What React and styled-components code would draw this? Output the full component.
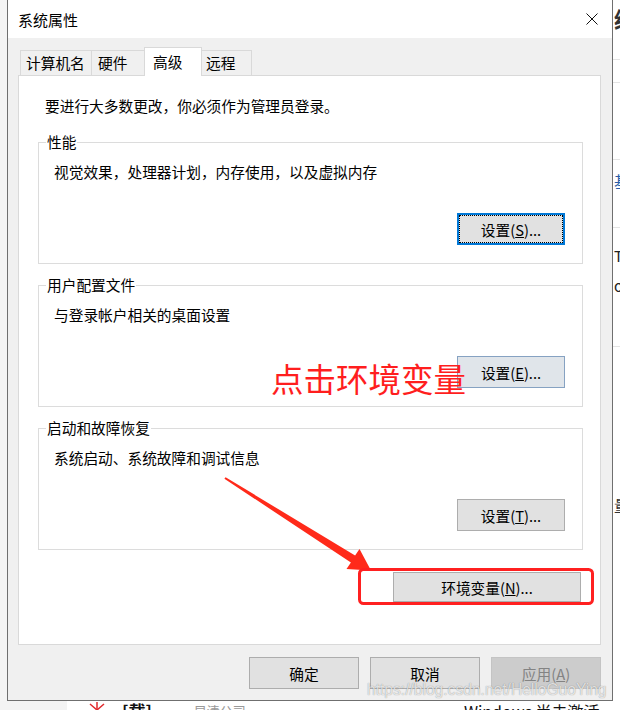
import React from "react"
import styled, { createGlobalStyle } from "styled-components"

const GlobalStyle = createGlobalStyle`
html, body {
    margin: 0;
    padding: 0;
    background: #fff;
}
body {
    font-family: "Noto Sans CJK SC", "Liberation Sans", sans-serif;
    font-size: 14.7px;
    color: #000;
}
`

const Page = styled.div`
position: relative;
width: 620px;
height: 710px;
overflow: hidden;
display: flex;
flex-direction: column;
background: #fff;
`

const TopRow = styled.div`
display: flex;
height: 701px;
`

const LeftGutter = styled.div`
width: 7px;
background: #f4f4f4;
`

const Dialog = styled.div`
width: 604px;
height: 700px;
border: 1px solid #6f6f6f;
border-top: none;
background: #f0f0f0;
display: flex;
flex-direction: column;
`

const TitleBar = styled.div`
height: 38px;
background: #fff;
display: flex;
align-items: center;
justify-content: space-between;
padding-left: 10px;
font-size: 15px;
`

const CloseButton = styled.div`
width: 41px;
height: 38px;
display: flex;
align-items: center;
justify-content: center;
`

const Body = styled.div`
flex: 1;
display: flex;
flex-direction: column;
padding: 9px 11px 11px 10px;
`

const TabStrip = styled.div`
display: flex;
align-items: flex-end;
height: 28px;
margin-left: 2px;
position: relative;
z-index: 1;
`

const Tab = styled.div`
box-sizing: border-box;
width: ${p => p.$w}px;
height: ${p => (p.$active ? 29 : 25)}px;
margin-left: -1px;
margin-bottom: ${p => (p.$active ? -1 : 0)}px;
padding-left: ${p => p.$pl}px;
padding-top: ${p => (p.$active ? 4 : 2)}px;
line-height: 20px;
font-size: 14.7px;
border: 1px solid #d9d9d9;
border-bottom: none;
background: ${p => (p.$active ? "#fff" : "#f0f0f0")};
&:first-child {
    margin-left: 0;
}
`

const Panel = styled.div`
box-sizing: border-box;
height: 570px;
border: 1px solid #d9d9d9;
background: #fff;
padding: 20px 17px 0 19px;
display: flex;
flex-direction: column;
`

const Intro = styled.div`
line-height: 20px;
margin-left: 7px;
`

const Group = styled.fieldset`
margin: ${p => p.$mt}px 0 0 0;
padding: 0 17px 18px 15px;
border: 1px solid #dcdcdc;
min-width: 0;
`

const Legend = styled.legend`
padding: 0 1px;
margin-left: -8px;
line-height: 20px;
`

const Desc = styled.div`
margin-top: 10px;
line-height: 20px;
`

const ButtonRow = styled.div`
display: flex;
justify-content: flex-end;
gap: ${p => p.$gap || 0}px;
margin-top: ${p => p.$mt || 0}px;
margin-right: ${p => p.$mr || 0}px;
`

const Button = styled.div`
box-sizing: border-box;
width: ${p => p.$w}px;
height: ${p => p.$h || 32}px;
display: flex;
align-items: center;
justify-content: center;
font-size: 14.7px;
background: #e1e1e1;
border: 1px solid #adadad;
color: #000;
${p => p.$variant === "focus" && `
    border: 2px solid #0078d7;
    outline: 1px dotted #000;
    outline-offset: -3px;
`}
${p => p.$variant === "hover" && `
    background: #e0e5ea;
    border-color: #86a2c2;
`}
${p => p.$variant === "disabled" && `
    background: #cccccc;
    border-color: #c4c4c4;
    color: #838383;
`}
`

const RightStrip = styled.div`
flex: 1;
display: flex;
flex-direction: column;
overflow: hidden;
background: #fff;
`

const StripRow = styled.div`
height: ${p => p.$h}px;
flex-shrink: 0;
box-sizing: border-box;
border-bottom: ${p => (p.$line ? "1px solid #e4e4e4" : "none")};
padding-left: 1px;
padding-top: ${p => p.$pt || 0}px;
font-size: ${p => p.$fs || 15}px;
line-height: 20px;
font-weight: ${p => (p.$bold ? 700 : 400)};
color: ${p => p.$color || "#222"};
white-space: nowrap;
`

const BottomStrip = styled.div`
height: 9px;
display: flex;
overflow: hidden;
background: #fff;
`

const GrayBlock = styled.div`
width: 67px;
background: #f3f3f3;
`

const StripText = styled.div`
margin-left: ${p => p.$ml}px;
margin-top: 1px;
font-size: ${p => p.$fs || 16}px;
line-height: 18px;
font-weight: ${p => (p.$bold ? 700 : 400)};
color: ${p => p.$color || "#111"};
white-space: nowrap;
`

const Annotation = styled.svg`
position: absolute;
left: 0;
top: 0;
pointer-events: none;
`

const CalloutText = styled.div`
position: absolute;
left: 271px;
top: 361px;
font-size: 32.5px;
line-height: 34px;
color: #ff1e1e;
white-space: nowrap;
`

const Watermark = styled.div`
position: absolute;
left: 367px;
top: 680px;
font-family: "Liberation Sans", Arial, sans-serif;
font-size: 15.6px;
line-height: 20px;
color: rgba(255, 255, 255, 0.75);
text-shadow: 0 0 1px rgba(0, 0, 0, 0.45);
white-space: nowrap;
`

const tabs = [
    { label: "计算机名", w: 72, pl: 5 },
    { label: "硬件", w: 54, pl: 6 },
    { label: "高级", w: 58, pl: 8, active: true },
    { label: "远程", w: 51, pl: 4 },
]

const groups = [
    { title: "性能", desc: "视觉效果，处理器计划，内存使用，以及虚拟内存", key: "S", variant: "focus", mt: 16 },
    { title: "用户配置文件", desc: "与登录帐户相关的桌面设置", key: "E", variant: "hover", mt: 11 },
    { title: "启动和故障恢复", desc: "系统启动、系统故障和调试信息", key: "T", mt: 11 },
]

const Mn = ({ children }) => <span>(<u>{children}</u>)</span>

const App = () => {
    return <Page>
        <GlobalStyle />
        <TopRow>
            <LeftGutter />
            <Dialog>
                <TitleBar>
                    <span>系统属性</span>
                    <CloseButton>
                        <svg width="12" height="12" viewBox="0 0 12 12">
                            <path d="M0.5 0.5 L11.5 11.5 M11.5 0.5 L0.5 11.5" stroke="#111" strokeWidth="1" fill="none" />
                        </svg>
                    </CloseButton>
                </TitleBar>
                <Body>
                    <TabStrip>
                        {tabs.map(t => <Tab key={t.label} $w={t.w} $pl={t.pl} $active={t.active}>{t.label}</Tab>)}
                    </TabStrip>
                    <Panel>
                        <Intro>要进行大多数更改，你必须作为管理员登录。</Intro>
                        {groups.map(g => <Group key={g.title} $mt={g.mt}>
                            <Legend>{g.title}</Legend>
                            <Desc>{g.desc}</Desc>
                            <ButtonRow $mt={31}>
                                <Button $w={108} $variant={g.variant}>设置<Mn>{g.key}</Mn>...</Button>
                            </ButtonRow>
                        </Group>)}
                        <ButtonRow $mt={22} $mr={2}>
                            <Button $w={188} $h={30}>环境变量<Mn>N</Mn>...</Button>
                        </ButtonRow>
                    </Panel>
                    <ButtonRow $mt={12} $gap={11}>
                        <Button $w={110}>确定</Button>
                        <Button $w={110}>取消</Button>
                        <Button $w={110} $variant="disabled">应用<Mn>A</Mn></Button>
                    </ButtonRow>
                </Body>
            </Dialog>
            <RightStrip>
                <StripRow $h={60} $line $pt={8} $fs={22} $bold $color="#333">级</StripRow>
                <StripRow $h={23} $line />
                <StripRow $h={77} $line />
                <StripRow $h={68} $line $pt={11} $fs={16} $color="#2a5ea8">基</StripRow>
                <StripRow $h={119} $line $pt={18} $color="#222">T<br /><span style={{ display: "block", marginTop: 10 }}>or</span></StripRow>
                <StripRow $h={148} $pt={147} />
                <StripRow $h={20} $fs={16} $color="#333">量</StripRow>
            </RightStrip>
        </TopRow>
        <BottomStrip>
            <GrayBlock />
            <svg width="20" height="9" viewBox="0 0 20 9" style={{ marginLeft: 20 }}>
                <path d="M3 3 L10 9 L17 3" stroke="#e0282c" strokeWidth="1.5" fill="none" />
                <path d="M10 1 L10 9" stroke="#e0282c" strokeWidth="1.5" />
            </svg>
            <StripText $ml={15} $bold $fs={17}>[载]</StripText>
            <StripText $ml={42} $fs={13} $color="#999">早清公司</StripText>
            <StripText $ml={218} $fs={16}>Windows 尚未激活.</StripText>
        </BottomStrip>
        <Annotation width="620" height="710" viewBox="0 0 620 710">
            <polygon points="225.6,477.2 355.1,555.6 359.5,549 371,570.5 346.5,569 350.9,562.4 224.4,478.8" fill="#ff2a1a" />
            <rect x="359.5" y="569.5" width="233" height="34" rx="4" ry="4" fill="none" stroke="#ff2020" strokeWidth="3" />
        </Annotation>
        <CalloutText>点击环境变量</CalloutText>
        <Watermark>https://blog.csdn.net/HelloGuoYing</Watermark>
    </Page>
}

export default App
